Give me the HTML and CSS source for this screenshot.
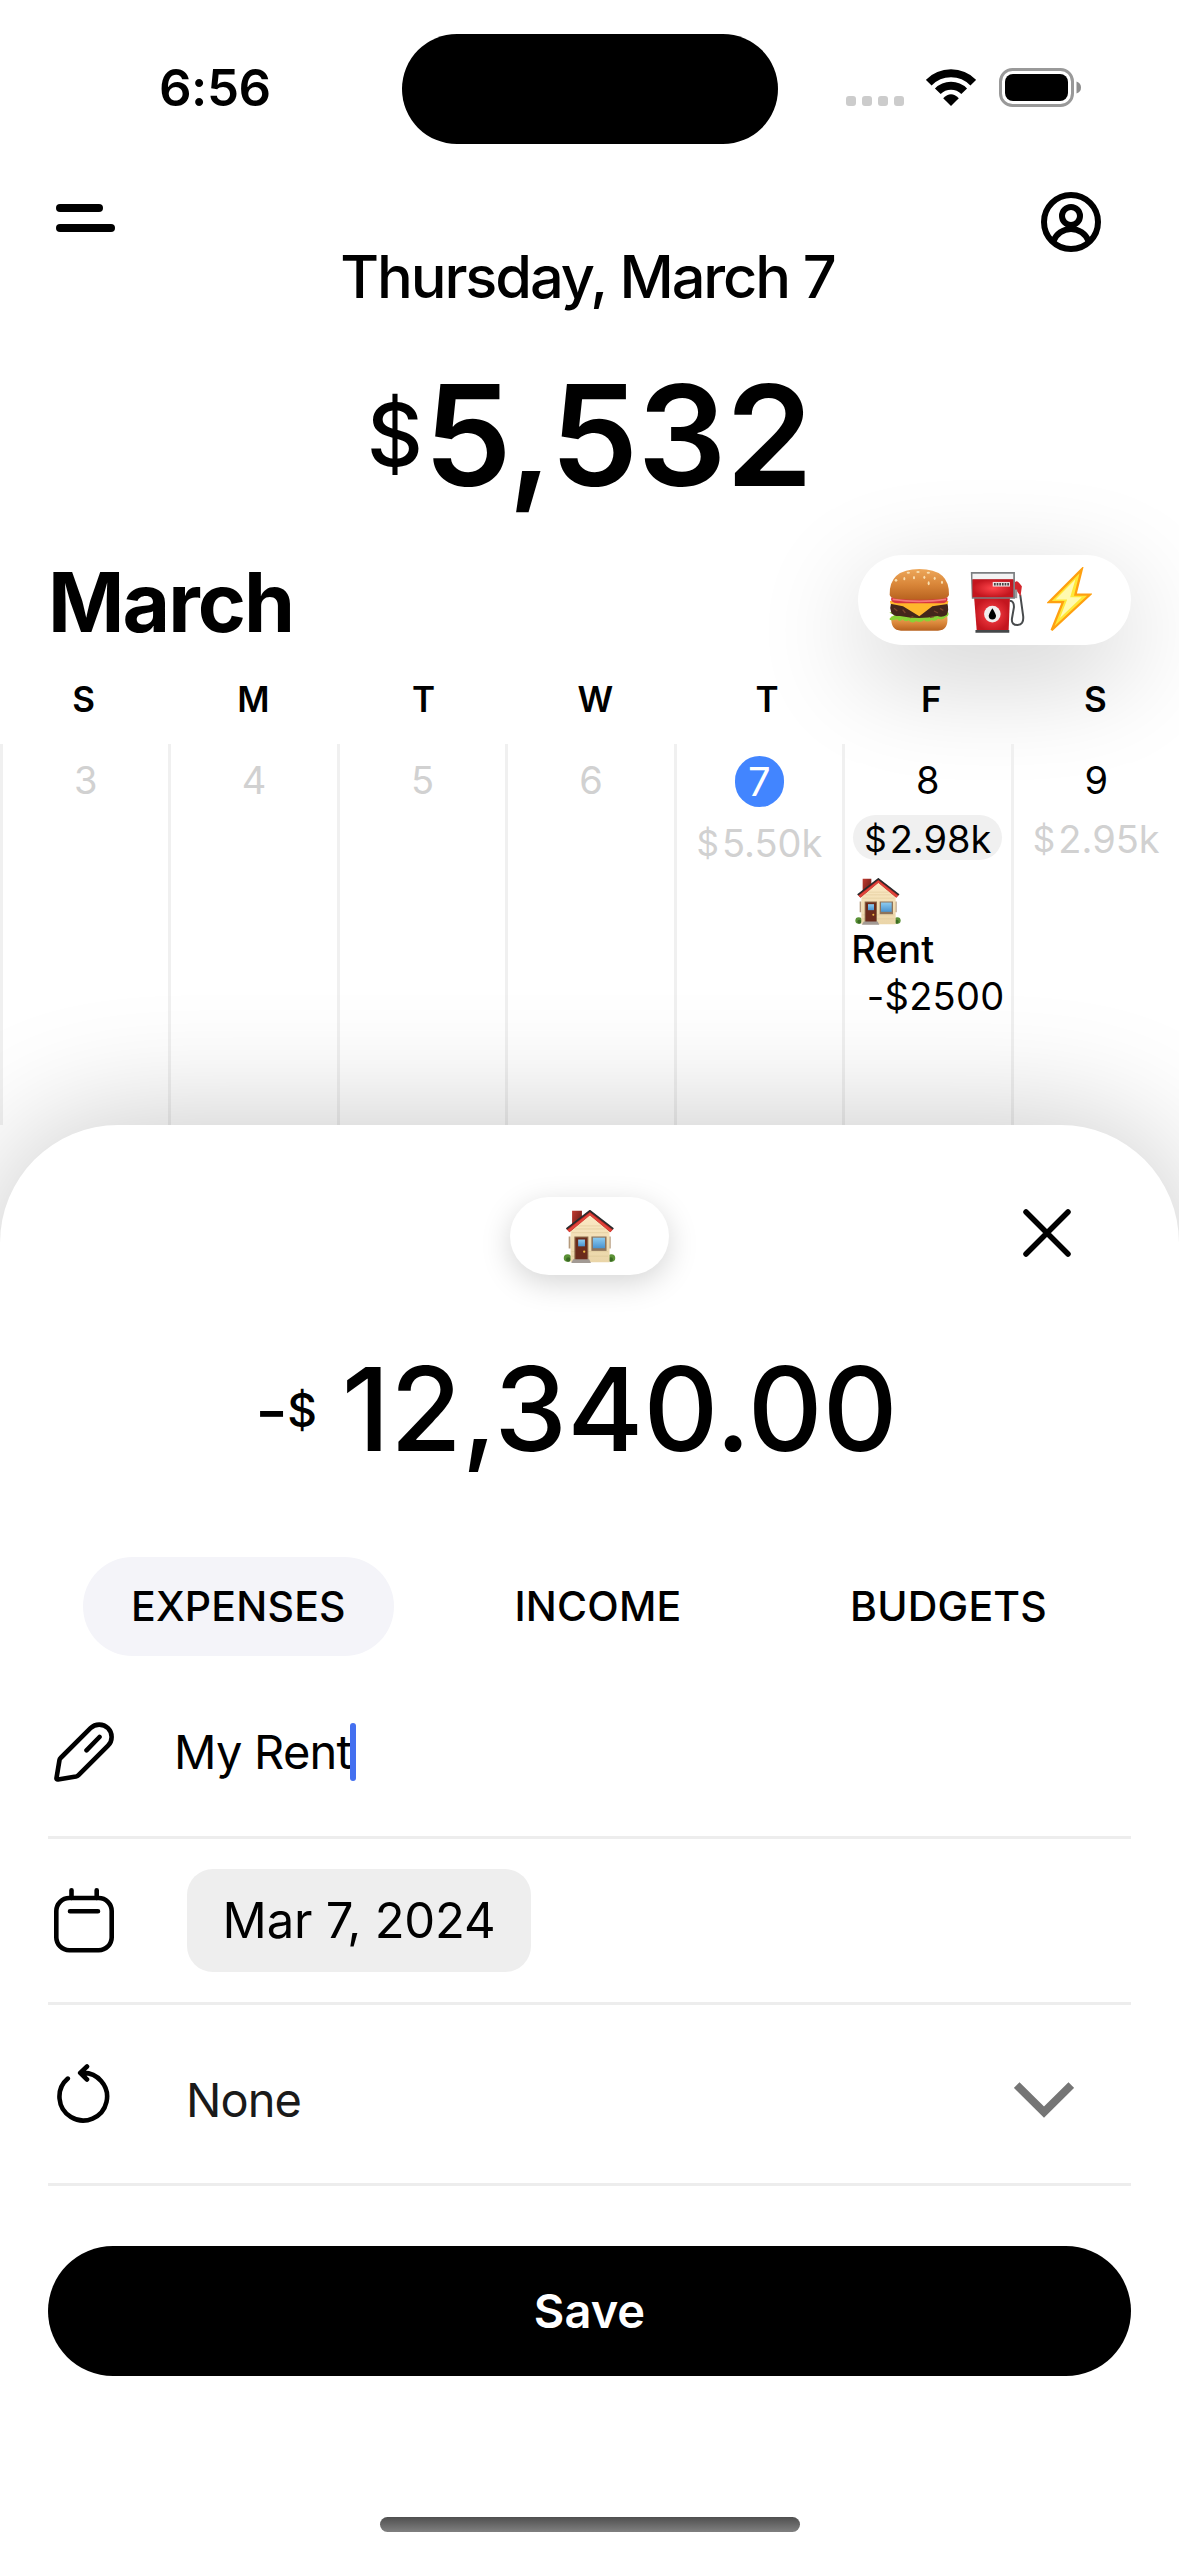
FILE: index.html
```html
<!DOCTYPE html>
<html lang="en">
<head>
<meta charset="utf-8">
<title>Budget calendar</title>
<link rel="stylesheet" href="styles.css">
</head>
<body>
<svg class="defs" aria-hidden="true">
  <defs>
    <linearGradient id="wall" x1="0" y1="0" x2="0" y2="1"><stop offset="0" stop-color="#fbe9c4"/><stop offset="1" stop-color="#ead5a8"/></linearGradient>
    <linearGradient id="glass" x1="0" y1="0" x2="0" y2="1"><stop offset="0" stop-color="#8ccbf0"/><stop offset="1" stop-color="#4a93cf"/></linearGradient>
    <linearGradient id="brick" x1="0" y1="0" x2="1" y2="1"><stop offset="0" stop-color="#c23b30"/><stop offset="1" stop-color="#551512"/></linearGradient>
    <linearGradient id="bun" x1="0" y1="0" x2="0" y2="1"><stop offset="0" stop-color="#eda75a"/><stop offset=".5" stop-color="#d98639"/><stop offset="1" stop-color="#b8621f"/></linearGradient>
    <radialGradient id="pump"><stop offset="0" stop-color="#ff454b"/><stop offset="1" stop-color="#c4161f"/></radialGradient>
    <symbol id="house" viewBox="0 0 138 140">
      <circle cx="11" cy="127" r="10" fill="#5b9136"/><circle cx="127" cy="127" r="10" fill="#5b9136"/>
      <circle cx="13" cy="131" r="6" fill="#3a6b22"/><circle cx="125" cy="131" r="6" fill="#3a6b22"/>
      <path d="M14 70h5v32h-5zM120 70h5v32h-5z" fill="#b59a7c"/>
      <path d="M23 2h26v34L23 54z" fill="url(#brick)"/>
      <path d="M19 54L70 12l52 42v84H19z" fill="url(#wall)"/>
      <path d="M40 42h60M30 50h80M22 60h96M22 110h96M22 122h96" stroke="#dcc594" stroke-width="1.5"/>
      <path d="M8 50L70 1l62 49-8 9-54-45-54 45z" fill="#b3231f"/>
      <path d="M11 53L70 7l59 46-5 5-54-44-54 44z" fill="#e0443b"/>
      <path d="M8 50L70 2l62 48" fill="none" stroke="#292b2d" stroke-width="4.500"/>
      <path d="M29 70h37v66H29z" fill="#8d6a4a"/><path d="M32 73h31v60H32z" fill="#6b2b1b"/>
      <path d="M39 78h18v18H39z" fill="url(#glass)"/><circle cx="55" cy="110" r="3" fill="#f2bc45"/>
      <path d="M74 70h40v38H74z" fill="#8d735a"/><path d="M78 73h32v28H78z" fill="url(#glass)"/>
      <path d="M26 130h42l5 10H21z" fill="#a29a94"/>
    </symbol>
  </defs>
</svg>

<main class="screen">
  <header class="status">
    <span class="status-time">6:56</span>
    <span class="island"></span>
    <div class="status-icons">
      <span class="cell-dots"><i></i><i></i><i></i><i></i></span>
      <svg class="wifi" viewBox="0 0 50 37"><g fill="none" stroke="#000" stroke-width="8"><path d="M2.700 13.600A31 31 0 0 1 47.300 13.600"/><path d="M11.800 22.200A18.500 18.500 0 0 1 38.200 22.200"/></g><path d="M25 37l-7.800-7.700Q25 21 32.800 29.300z"/></svg>
      <svg class="battery" viewBox="0 0 82 39"><rect x="1.500" y="1.500" width="72" height="36" rx="12" fill="none" stroke="#999" stroke-width="3"/><rect x="6" y="6" width="63" height="27" rx="8"/><path d="M77.500 13.500q4.500 1.500 4.500 6t-4.500 6z" fill="#8e8e8e"/></svg>
    </div>
  </header>

  <nav class="toolbar">
    <div class="menu"><i></i><i></i></div>
    <svg class="profile" viewBox="0 0 60 60" fill="none" stroke="#000" stroke-width="6"><circle cx="30" cy="30" r="27"/><circle cx="30" cy="24" r="9"/><path d="M12.500 49A18.700 18.700 0 0 1 47.500 49"/></svg>
  </nav>

  <h1 class="today-title">Thursday, March 7</h1>
  <div class="balance"><span class="balance-sign">$</span><span class="balance-value">5,532</span></div>

  <div class="month-row">
    <h2 class="month">March</h2>
    <div class="quick">
      <svg class="burger" viewBox="207 144 183 186">
        <path d="M214 286q84 20 168 0 4 43-28 43H243q-32 0-29-43z" fill="url(#bun)"/>
        <path d="M208 274q8 8 20 5l-18 12q-5 8 8 7l14-3q6 10 16 0 8 10 18 3 10 12 22 2 14 8 24-3 10 9 22 0 12 6 20-4 16 6 22-4 12-4 9-14-4-6-12-3z" fill="#8ad136"/>
        <path d="M213 247h169q6 20-2 35-14 9-28 3-54 12-112 0-18 2-26-10-6-14-1-28z" fill="#44261b"/>
        <path d="M222 262l10 8m16-4l8 10m86-6l12 6m6-14l10 6m-100 22l10-3m50 2l12-2" stroke="#77432b" stroke-width="4"/>
        <path d="M210 240h175l-2 9-46 7-39 30-49-30-38-8z" fill="#ffb72b"/>
        <path d="M214 229h168q5 18-20 18H233q-24-1-19-18z" fill="#d8363f"/><path d="M218 235q80 12 160 0" stroke="#f4797a" stroke-width="5" fill="none"/>
        <path d="M209 222q-2-78 89-78t89 78q-2 12-40 13-50 3-98 0-38-1-40-13z" fill="url(#bun)"/>
        <g fill="#f9dfb0"><ellipse cx="265" cy="155" rx="5" ry="3"/><ellipse cx="294" cy="153" rx="5" ry="3"/><ellipse cx="325" cy="155" rx="5" ry="3"/><ellipse cx="253" cy="173" rx="3" ry="5"/><ellipse cx="282" cy="170" rx="3" ry="5"/><ellipse cx="313" cy="169" rx="3" ry="5"/><ellipse cx="344" cy="172" rx="3" ry="5"/><ellipse cx="228" cy="178" rx="4" ry="4"/><ellipse cx="326" cy="187" rx="3" ry="6"/><ellipse cx="366" cy="184" rx="3" ry="5"/></g>
      </svg>
      <svg class="gas" viewBox="450 150 165 187">
        <path d="M569 240q14 0 13 20l-6 34q-2 19 17 19 19-1 17-26l-9-66" fill="none" stroke="#484b4d" stroke-width="6"/>
        <path d="M585 184q6-7 13 2l8 10-4 30-11-16-6-2z" fill="#d3262c"/><path d="M580 206h12v26h-12z" fill="#999"/>
        <path d="M462 230h108l-4 102h-96z" fill="url(#pump)"/>
        <path d="M452 153h133v81H455z" fill="#7b7e80"/><path d="M457 158h123v18H457z" fill="#f3f3f3"/><path d="M457 175h123v54H457z" fill="url(#pump)"/>
        <path d="M518 183h52v14h-52z" fill="#f0dede"/><path d="M522 190h46" stroke="#444" stroke-width="8" stroke-dasharray="5 3"/>
        <circle cx="517" cy="280" r="25" fill="#f1eeee"/><path d="M517 262q10 16 11 23a11 11 0 0 1-22 0q1-7 11-23z"/>
        <path d="M466 328h102v8H466z" fill="#45484a"/>
      </svg>
      <svg class="bolt" viewBox="680 142 136 197"><path d="M785 148L686 247h42l-34 85 116-108h-44z" fill="#ffe838" stroke="#ffa010" stroke-width="7"/><path d="M766 178l-60 61h35l-22 56 66-63h-35z" fill="#fffab0"/></svg>
    </div>
  </div>

  <div class="weekdays"><span>S</span><span>M</span><span>T</span><span>W</span><span>T</span><span>F</span><span>S</span></div>

  <section class="days">
    <div class="day past"><span class="num">3</span></div>
    <div class="day past"><span class="num">4</span></div>
    <div class="day past"><span class="num">5</span></div>
    <div class="day past"><span class="num">6</span></div>
    <div class="day today"><span class="num">7</span><span class="total"><small>$</small>5.50k</span></div>
    <div class="day"><span class="num">8</span><span class="total picked"><small>$</small>2.98k</span>
      <div class="entry"><svg class="entry-icon"><use href="#house"/></svg><span class="entry-name">Rent</span><span class="entry-sum">-$2500</span></div>
    </div>
    <div class="day"><span class="num">9</span><span class="total"><small>$</small>2.95k</span></div>
  </section>

  <section class="sheet">
    <div class="sheet-head">
      <div class="category"><svg class="category-icon"><use href="#house"/></svg></div>
      <svg class="close" viewBox="0 0 48 48"><path d="M3 3l42 42M45 3L3 45" stroke="#000" stroke-width="5.500" stroke-linecap="round"/></svg>
    </div>
    <div class="amount"><span class="minus">-</span><span class="currency">$</span><span class="figure">12,340.00</span></div>
    <div class="tabs"><span class="tab active">EXPENSES</span><span class="tab">INCOME</span><span class="tab">BUDGETS</span></div>
    <div class="row row-name">
      <svg class="icon" viewBox="0 0 60 60"><path d="M36.500 6.200A12.200 12.200 0 0 1 54 23.700L24.500 53.200Q23.500 54.200 22 54.500L4 57.500Q2.200 57.700 2.500 56L5.500 38Q5.700 36.800 6.600 36zM45.500 15L32.500 28.300"/></svg>
      <span class="name">My Rent</span><span class="caret"></span>
    </div>
    <div class="row row-date">
      <svg class="icon icon-date" viewBox="0 0 60 65"><rect x="2.300" y="10" width="55.400" height="52.300" rx="13"/><path d="M17.500 2.300V10M42.700 2.300V10M16 23.300h28"/></svg>
      <span class="date">Mar 7, 2024</span>
    </div>
    <div class="row row-repeat">
      <svg class="icon icon-repeat" viewBox="0 0 53 59"><path d="M10.800 14.600A23.800 23.800 0 1 0 24 9M30 2.500L23.200 8.900L30 15.500"/></svg>
      <span class="repeat">None</span>
      <svg class="chevron" viewBox="0 0 60 36"><path d="M2.700 3L30 30 57.300 3" fill="none" stroke="#757575" stroke-width="8"/></svg>
    </div>
    <button class="save">Save</button>
    <div class="home"></div>
  </section>
</main>
</body>
</html>
```
FILE: styles.css
```css
* { box-sizing: border-box; }
body { margin: 0; background: #fff; color: #000; font-family: Inter, "Liberation Sans", sans-serif; }
h1, h2 { margin: 0; }
svg { display: block; flex: none; }
.defs { position: absolute; width: 0; height: 0; }
.screen { width: 1179px; height: 2556px; overflow: hidden; display: flex; flex-direction: column; }
.screen > * { flex: none; }

.status { height: 178px; display: grid; grid-template-columns: 402px 376px 1fr; align-items: center; }
.status-time { padding-left: 159px; font-size: 51px; font-weight: 600; letter-spacing: -.5px; line-height: 60px; margin-top: -2px; }
.island { height: 110px; border-radius: 55px; background: #000; }
.status-icons { display: flex; align-items: center; padding-left: 68px; margin-top: -3px; }
.cell-dots { display: flex; gap: 6px; padding-top: 27px; }
.cell-dots i { width: 10px; height: 10px; border-radius: 3px; background: #ccc; }
.wifi { width: 50px; height: 37px; margin-left: 22px; }
.battery { width: 82px; height: 39px; margin-left: 23px; }

.toolbar { height: 74px; display: flex; justify-content: space-between; align-items: flex-end; padding: 0 78px 0 56px; }
.menu { display: flex; flex-direction: column; gap: 12px; padding-bottom: 20px; }
.menu i { width: 59px; height: 8px; border-radius: 4px; background: #000; }
.menu i:first-child { width: 47px; }
.profile { width: 60px; height: 60px; }

.today-title { font-size: 59.500px; font-weight: 500; letter-spacing: -2.100px; line-height: 49px; text-align: center; padding-right: 4px; }
.balance { display: flex; justify-content: center; align-items: center; gap: 1px; margin-top: 64px; height: 140px; line-height: 140px; }
.balance-sign { font-size: 87px; font-weight: 450; }
.balance-value { font-size: 140px; font-weight: 600; letter-spacing: -.77px; }

.month-row { margin-top: 50px; height: 90px; padding: 0 48px; display: flex; justify-content: space-between; align-items: center; }
.month { font-size: 82px; font-weight: 700; letter-spacing: -1.900px; line-height: 90px; padding-top: 5px; }
.quick { width: 273px; height: 90px; border-radius: 45px; background: #fff; box-shadow: 0 30px 110px rgba(0,0,0,.2); display: flex; align-items: center; padding-left: 31px; }
.burger { width: 61px; height: 62px; }
.gas { width: 55px; height: 62px; margin-left: 20px; margin-top: 4px; }
.bolt { width: 45px; height: 66px; margin-left: 22px; }

.weekdays { position: relative; display: flex; justify-content: space-around; margin-top: 37px; padding: 0 1px; font-size: 35px; font-weight: 600; line-height: 35px; }
.days { display: grid; grid-template-columns: repeat(7, 1fr); margin-top: 27px; height: 381px; }
.day { border-left: 3px solid #f0f0f0; display: flex; flex-direction: column; align-items: center; font-size: 38px; min-width: 0; }
.num { line-height: 46px; margin-top: 13px; }
.past { color: #d1d1d1; }
.today .num { width: 49px; height: 51px; margin-top: 12px; border-radius: 25px; background: #4285ff; color: #fff; font-size: 40px; line-height: 51px; text-align: center; }
.total { margin-top: 12px; height: 45px; line-height: 45px; padding-top: 2px; color: #d1d1d1; display: flex; gap: 3px; white-space: nowrap; }
.total small { font-size: 35px; }
.picked { width: 149px; justify-content: center; border-radius: 23px; background: #f0f0f0; color: #000; }
.entry { align-self: stretch; display: flex; flex-direction: column; padding: 18px 6px 0 6px; }
.entry-icon { width: 46px; height: 47px; margin-left: 4px; }
.entry-name { font-weight: 500; line-height: 45px; letter-spacing: .3px; margin-top: 2px; }
.entry-sum { line-height: 48px; letter-spacing: .3px; text-align: right; white-space: nowrap; }

.sheet { position: relative; height: 1431px; background: #fff; border-radius: 118px 118px 0 0; box-shadow: 0 0 130px rgba(0,0,0,.23); display: flex; flex-direction: column; }
.sheet-head { display: grid; grid-template-columns: 1fr 159px 1fr; align-items: center; padding-top: 72px; }
.category { grid-column: 2; height: 78px; border-radius: 39px; background: #fff; box-shadow: 0 8px 30px rgba(0,0,0,.17); display: flex; align-items: center; justify-content: center; }
.category-icon { width: 53px; height: 53px; }
.close { justify-self: end; width: 48px; height: 48px; margin: 0 108px 6px 0; }
.amount { display: flex; align-items: center; height: 117px; line-height: 117px; margin-top: 76px; padding-left: 255px; }
.minus { font-size: 72px; }
.currency { font-size: 46px; font-weight: 450; margin-left: -1px; padding-top: 1px; }
.figure { font-size: 116px; font-weight: 500; letter-spacing: .2px; margin-left: 25px; }
.tabs { display: flex; justify-content: space-between; margin-top: 89px; padding: 0 84px 0 83px; }
.tab { height: 99px; line-height: 99px; padding: 0 48px; border-radius: 50px; font-size: 41px; font-weight: 500; letter-spacing: .2px; }
.active { background: #f4f4f9; }
.row { margin: 0 48px; padding-left: 6px; border-bottom: 3px solid #ededed; display: flex; align-items: center; }
.icon { width: 60px; height: 60px; fill: none; stroke: #000; stroke-width: 4.600; stroke-linecap: round; stroke-linejoin: round; }
.row-name { height: 183px; padding-top: 12px; }
.name { font-size: 47px; letter-spacing: -.75px; line-height: 60px; margin-left: 60px; }
.caret { width: 6px; height: 58px; border-radius: 3px; background: #4470f0; margin-left: -1px; }
.row-date { height: 166px; }
.icon-date { height: 65px; }
.date { margin-left: 73px; width: 344px; height: 103px; line-height: 104px; border-radius: 26px; background: #eee; text-align: center; font-size: 49px; letter-spacing: -.2px; }
.row-repeat { height: 181px; padding-left: 9px; }
.icon-repeat { width: 53px; height: 59px; margin-top: -2px; }
.repeat { font-size: 47px; letter-spacing: -.95px; line-height: 60px; margin-left: 76px; padding-top: 12px; color: #1a1a1a; }
.chevron { width: 60px; height: 36px; margin: 12px 57px 0 auto; }
.save { height: 130px; margin: 60px 48px 0; border: 0; border-radius: 65px; background: #000; color: #fff; font: 600 47px/130px Inter, sans-serif; letter-spacing: 0; padding: 0; }
.home { width: 420px; height: 15px; border-radius: 8px; margin: 141px auto 0; background: linear-gradient(#4f4f4f, #808080); }
```
